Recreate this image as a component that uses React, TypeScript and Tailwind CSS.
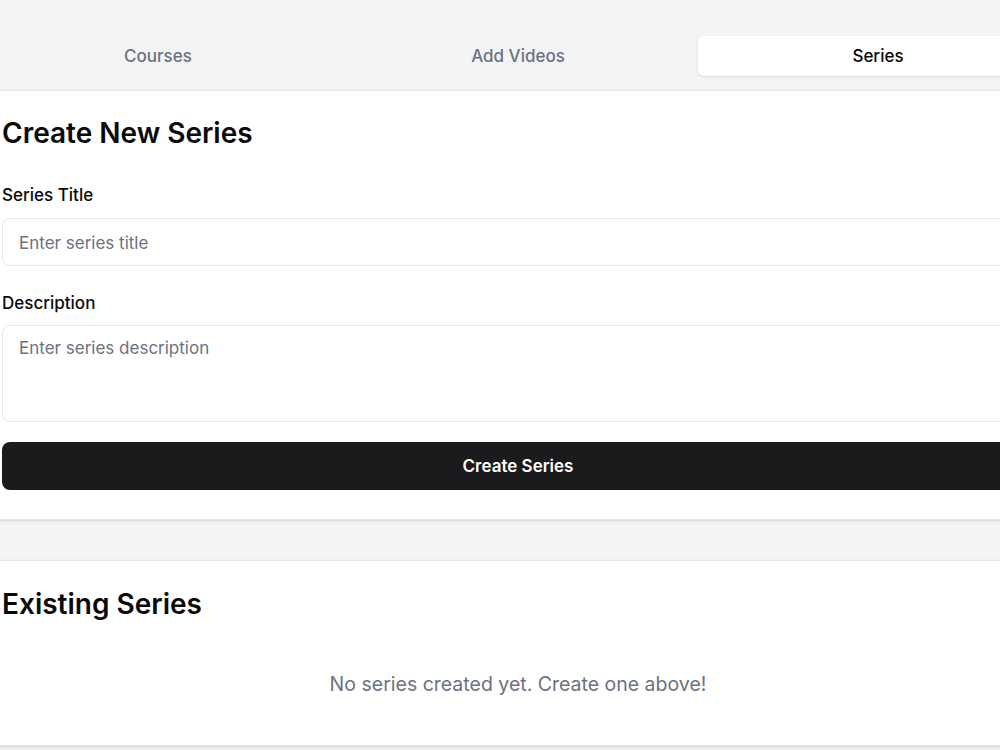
import { useState } from "react";

const tabs = ["Courses", "Add Videos", "Series"];

export default function App() {
  const [active, setActive] = useState("Series");
  const [title, setTitle] = useState("");
  const [description, setDescription] = useState("");

  return (
    <div className="w-screen min-h-screen overflow-hidden bg-[#f3f4f6] font-['Inter',sans-serif] text-[#0a0a0a]">
      <div className="-ml-[22px] w-[1080px]">
        <div className="pt-9 pb-[14px]">
          <div className="grid grid-cols-3 h-10">
            {tabs.map((tab) => (
              <button
                key={tab}
                onClick={() => setActive(tab)}
                className={`rounded-md pt-[2px] text-[17px] font-medium ${
                  active === tab
                    ? "bg-white text-[#0a0a0a] shadow-sm"
                    : "text-[#6b7280]"
                }`}
              >
                {tab}
              </button>
            ))}
          </div>
        </div>

        <div className="bg-white border-y border-[#e5e7eb] shadow-sm px-6 pt-6 pb-[29px]">
          <h2 className="text-[28px] leading-9 font-semibold mb-[32px]">
            Create New Series
          </h2>
          <label className="block text-[17px] leading-6 font-medium mb-[11px]">
            Series Title
          </label>
          <input
            value={title}
            onChange={(e) => setTitle(e.target.value)}
            placeholder="Enter series title"
            className="w-full h-12 rounded-lg border border-[#e5e7eb] px-4 pt-[2px] text-[17px] placeholder:text-[#6b7280] outline-none"
          />
          <label className="block text-[17px] leading-6 font-medium mt-[25px] mb-[10px]">
            Description
          </label>
          <textarea
            value={description}
            onChange={(e) => setDescription(e.target.value)}
            placeholder="Enter series description"
            className="block w-full h-[97px] rounded-lg border border-[#e5e7eb] px-4 py-[10px] text-[17px] resize-none placeholder:text-[#6b7280] outline-none"
          />
          <button className="mt-5 w-full h-12 rounded-lg bg-[#1b1b1d] pt-[2px] text-white text-[17px] font-semibold">
            Create Series
          </button>
        </div>

        <div className="mt-10 bg-white border-y border-[#e5e7eb] shadow-sm px-6 pt-[25px] pb-[15px]">
          <h2 className="text-[28px] leading-9 font-semibold mb-4">
            Existing Series
          </h2>
          <p className="py-8 text-center text-[19.5px] leading-7 text-[#6b7280]">
            No series created yet. Create one above!
          </p>
        </div>
      </div>
    </div>
  );
}
